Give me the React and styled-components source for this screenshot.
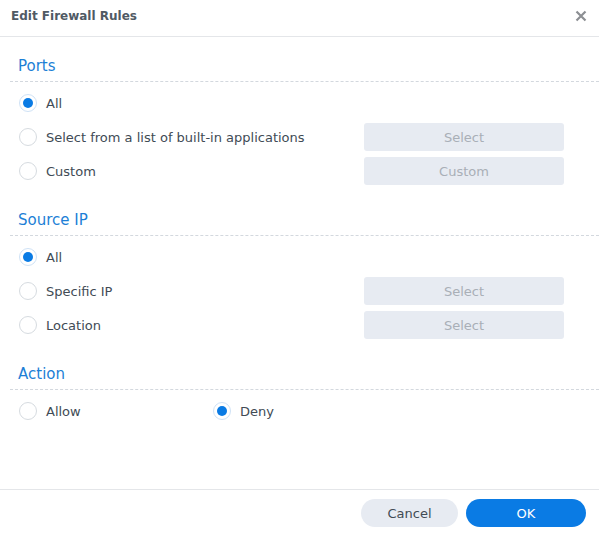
import React from "react";
import styled, { createGlobalStyle } from "styled-components";

const Global = createGlobalStyle`
  html, body { margin: 0; padding: 0; background: #fff; }
  body { font-family: "DejaVu Sans", Verdana, sans-serif; color: #414b55; }
  * { box-sizing: border-box; }
`;

const Dialog = styled.div`
  width: 599px;
  height: 533px;
  display: flex;
  flex-direction: column;
  background: #fff;
`;

const Header = styled.div`
  height: 37px;
  flex: none;
  display: flex;
  align-items: center;
  justify-content: space-between;
  padding: 0 12px 4px 11px;
  border-bottom: 1px solid #e4e6e9;
`;

const Title = styled.div`
  font-size: 12px;
  font-weight: bold;
  color: #505a64;
`;

const Close = styled.button`
  border: 0;
  background: none;
  padding: 0;
  width: 12px;
  height: 12px;
  display: flex;
  cursor: pointer;
`;

const Body = styled.div`
  flex: 1;
  padding: 7px 35px 0 10px;
`;

const Section = styled.div`
  & + & { margin-top: 13px; }
`;

const SectionTitle = styled.div`
  height: 38px;
  padding: 13px 0 0 8px;
  margin-right: -35px;
  font-size: 15px;
  line-height: 18px;
  color: #1d7fd6;
  border-bottom: 1px dashed #d3d8de;
`;

const Rows = styled.div`
  display: flex;
  flex-direction: column;
  gap: 6px;
  padding: 7px 0 0 9px;
`;

const Row = styled.div`
  display: flex;
  align-items: center;
  height: 28px;
`;

const RadioLabel = styled.label`
  display: flex;
  align-items: center;
  gap: 9px;
  font-size: 13px;
  color: #414b55;
  flex: ${(p) => (p.$grow ? 1 : "none")};
  width: ${(p) => (p.$width ? p.$width + "px" : "auto")};
`;

const Circle = styled.span`
  width: 18px;
  height: 18px;
  border-radius: 50%;
  border: 1px solid ${(p) => (p.$on ? "#cfe2f6" : "#d6dbe0")};
  background: #fff;
  display: flex;
  align-items: center;
  justify-content: center;
  &::after {
    content: "";
    width: 10px;
    height: 10px;
    border-radius: 50%;
    background: ${(p) => (p.$on ? "#0a7be4" : "transparent")};
  }
`;

const GhostButton = styled.button`
  width: 200px;
  height: 28px;
  border: 0;
  border-radius: 3px;
  background: #e7ebf2;
  color: #a9afb7;
  font-family: inherit;
  font-size: 13px;
  padding: 0;
`;

const Footer = styled.div`
  height: 44px;
  flex: none;
  border-top: 1px solid #e4e6e9;
  display: flex;
  justify-content: flex-end;
  align-items: flex-start;
  gap: 8px;
  padding: 9px 13px 0 0;
`;

const PillButton = styled.button`
  width: ${(p) => p.$w}px;
  height: 28px;
  border: 0;
  border-radius: 14px;
  font-family: inherit;
  font-size: 13px;
  background: ${(p) => (p.$primary ? "#0a7be4" : "#e7ebf2")};
  color: ${(p) => (p.$primary ? "#fff" : "#414b55")};
  cursor: pointer;
`;

const Radio = ({ on, children, grow, width }) => (
  <RadioLabel $grow={grow} $width={width}>
    <Circle $on={on} />
    {children}
  </RadioLabel>
);

export default function App() {
  return (
    <>
      <Global />
      <Dialog>
        <Header>
          <Title>Edit Firewall Rules</Title>
          <Close aria-label="Close">
            <svg width="12" height="12" viewBox="0 0 12 12">
              <path d="M1.5 1.5 L10.5 10.5 M10.5 1.5 L1.5 10.5" stroke="#8c8f93" strokeWidth="2.2" strokeLinecap="butt" />
            </svg>
          </Close>
        </Header>
        <Body>
          <Section>
            <SectionTitle>Ports</SectionTitle>
            <Rows>
              <Row><Radio on>All</Radio></Row>
              <Row>
                <Radio grow>Select from a list of built-in applications</Radio>
                <GhostButton>Select</GhostButton>
              </Row>
              <Row>
                <Radio grow>Custom</Radio>
                <GhostButton>Custom</GhostButton>
              </Row>
            </Rows>
          </Section>
          <Section>
            <SectionTitle>Source IP</SectionTitle>
            <Rows>
              <Row><Radio on>All</Radio></Row>
              <Row>
                <Radio grow>Specific IP</Radio>
                <GhostButton>Select</GhostButton>
              </Row>
              <Row>
                <Radio grow>Location</Radio>
                <GhostButton>Select</GhostButton>
              </Row>
            </Rows>
          </Section>
          <Section>
            <SectionTitle>Action</SectionTitle>
            <Rows>
              <Row>
                <Radio width={194}>Allow</Radio>
                <Radio on>Deny</Radio>
              </Row>
            </Rows>
          </Section>
        </Body>
        <Footer>
          <PillButton $w={97}>Cancel</PillButton>
          <PillButton $w={120} $primary>OK</PillButton>
        </Footer>
      </Dialog>
    </>
  );
}
